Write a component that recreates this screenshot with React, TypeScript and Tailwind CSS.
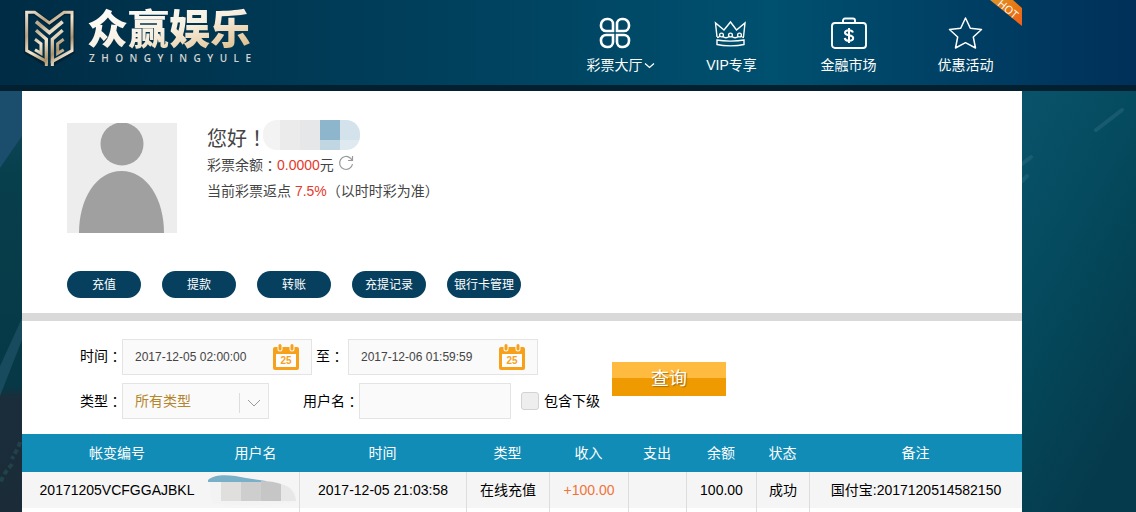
import type { ReactNode } from 'react';

const navLabel = 'flex items-center justify-center text-sm leading-5 text-white';

const actions = ['充值', '提款', '转账', '充提记录', '银行卡管理'];

const columns = [
  { title: '帐变编号', width: 'w-[19%]' },
  { title: '用户名', width: 'w-[8.7%]' },
  { title: '时间', width: 'w-[16.7%]' },
  { title: '类型', width: 'w-[8.3%]' },
  { title: '收入', width: 'w-[7.9%]' },
  { title: '支出', width: 'w-[5.8%]' },
  { title: '余额', width: 'w-[7%]' },
  { title: '状态', width: 'w-[5.3%]' },
  { title: '备注', width: 'w-[21.3%]' },
];

// Full-width punctuation sits in the middle of its square in the TC family
function Punct({ children }: { children: ReactNode }) {
  return <span className="font-['Noto_Sans_CJK_TC',sans-serif]">{children}</span>;
}

function Logo() {
  return (
    <a href="#" className="flex pt-2 pl-[2px]">
      <svg className="w-[51px] h-[60px]" viewBox="0 0 153 180" fill="none" strokeLinejoin="miter">
        <defs>
          <linearGradient id="metal" x1="0" y1="0" x2="150" y2="175" gradientUnits="userSpaceOnUse">
            <stop offset="0" stopColor="#f7f3ec" />
            <stop offset="0.3" stopColor="#b8a385" />
            <stop offset="0.5" stopColor="#f5e8d0" />
            <stop offset="0.7" stopColor="#a99069" />
            <stop offset="0.85" stopColor="#f8f0e2" />
            <stop offset="1" stopColor="#d8c7a8" />
          </linearGradient>
        </defs>
        <path d="M68 168 8 131V14h24l44 32 44-32h24v117l-60 37" stroke="#04141f" strokeWidth="16" opacity="0.5" />
        <g stroke="url(#metal)">
          <path d="M67 174V160L8 128V13h24l44 32 44-32h24v115l-59 32v14" strokeWidth="9" />
          <path d="M36 41l40 33 40-33" strokeWidth="11" />
          <path d="M36 67l31 27v72" strokeWidth="10" />
          <path d="M116 67L85 94v72" strokeWidth="10" />
          <path d="M33 94l18 13v29L33 125" strokeWidth="9" />
          <path d="M119 94l-18 13v29l18-11" strokeWidth="9" />
        </g>
      </svg>
      <span className="flex flex-col ml-3 w-[164px]">
        <span className="bg-linear-to-br from-white via-[#f8efe0] to-[#d9b67c] bg-clip-text text-transparent text-[41px] leading-[45px] font-black whitespace-nowrap">
          众赢娱乐
        </span>
        <span className="flex justify-between pl-[2px] text-[10px] leading-[10px] font-semibold text-[#d5d3cf] font-['Open_Sans',sans-serif]" aria-label="ZHONGYINGYULE">
          {'ZHONGYINGYULE'.split('').map((c, i) => (
            <span key={i}>{c}</span>
          ))}
        </span>
      </span>
    </a>
  );
}

function NavItem({ icon, children }: { icon: ReactNode; children: ReactNode }) {
  return (
    <a href="#" className="w-[117px] flex flex-col items-center gap-[5px] pt-4">
      <span className="h-[34px] flex items-center">{icon}</span>
      <span className={navLabel}>{children}</span>
    </a>
  );
}

function Header() {
  return (
    <header className="relative flex justify-between h-[91px] pl-[22px] pr-[112px] border-b-[6px] border-[#02202f] bg-linear-to-r from-[#002c45] via-[#00506f] via-68% to-[#003059] overflow-hidden">
      <Logo />
      <nav className="flex">
        <NavItem
          icon={
            <svg className="w-8 h-8" viewBox="0 0 32 32" fill="none" stroke="white" strokeWidth="2.6">
              <path d="M8 2h1a5 5 0 0 1 5 5v7H7a5 5 0 0 1-5-5V8a6 6 0 0 1 6-6z" />
              <path d="M24 2h-1a5 5 0 0 0-5 5v7h7a5 5 0 0 0 5-5V8a6 6 0 0 0-6-6z" />
              <path d="M8 30h1a5 5 0 0 0 5-5v-7H7a5 5 0 0 0-5 5v1a6 6 0 0 0 6 6z" />
              <path d="M24 30h-1a5 5 0 0 1-5-5v-7h7a5 5 0 0 1 5 5v1a6 6 0 0 1-6 6z" />
            </svg>
          }
        >
          <span className="ml-3">彩票大厅</span>
          <svg className="w-3 h-3" viewBox="0 0 12 12" fill="none" stroke="white" strokeWidth="1.3">
            <path d="M2 4.500l4.500 4 4.500-4" />
          </svg>
        </NavItem>
        <NavItem
          icon={
            <svg className="w-8 h-7 -ml-1" viewBox="0 0 32 28" fill="none" stroke="white" strokeWidth="1.4">
              <path d="M3 18 1.500 4l8.500 7 6.500-8 6 8L31 4l-1.500 14" />
              <path d="M3 21c7 1.500 20 1.500 27 0v4.500c-7 1.800-20 1.800-27 0z" />
              <circle cx="7.500" cy="16" r="1.900" />
              <circle cx="16.500" cy="16" r="1.900" />
              <circle cx="25.500" cy="16" r="1.900" />
              <path d="M3 18.500c2 0 2.500-.8 3-1.500M9 17.500c1.500 1.800 4.500 1.500 6 0M18 17.500c1.500 1.500 4.500 1.800 6 0M27 17c.5.800 1 1.500 3 1.500" />
            </svg>
          }
        >
          VIP专享
        </NavItem>
        <NavItem
          icon={
            <svg className="w-9 h-8" viewBox="0 0 36 32" fill="none" stroke="white" strokeWidth="1.900">
              <rect x="1" y="6" width="34" height="25" rx="3" />
              <path d="M12 6V3.500A2 2 0 0 1 14 1.500h8a2 2 0 0 1 2 2V6" />
              <path d="M18 11v15M22 15.500c-.5-1.500-2-2.300-4-2.300-2.500 0-4 1-4 2.600 0 3.600 8.200 1.500 8.200 5.200 0 1.800-1.700 2.800-4.200 2.800-2.300 0-4-1-4.300-2.800" strokeWidth="2" />
            </svg>
          }
        >
          金融市场
        </NavItem>
        <NavItem
          icon={
            <svg className="w-9 h-[34px]" viewBox="0 0 36 34" fill="none" stroke="white" strokeWidth="1.500" strokeLinejoin="round">
              <path d="M17.500 2l4.800 10.200 11.200 1.300-8.200 7.500 2.200 11-10-5.300-10 5.300 2.200-11L1.500 13.500l11.200-1.300z" />
            </svg>
          }
        >
          优惠活动
        </NavItem>
      </nav>
      <svg className="absolute top-0 right-[114px] w-8 h-[27px]" viewBox="0 0 32 27">
        <defs>
          <linearGradient id="hot" x1="0" y1="0" x2="1" y2="1">
            <stop offset="0" stopColor="#e0952e" />
            <stop offset="0.5" stopColor="#e87812" />
            <stop offset="1" stopColor="#f0601c" />
          </linearGradient>
        </defs>
        <path d="M0 0h23l9 8v18z" fill="url(#hot)" />
        <text x="18" y="13" transform="rotate(40 18 9)" textAnchor="middle" fontSize="11" fill="white" className="font-['Open_Sans',sans-serif]">
          HOT
        </text>
      </svg>
    </header>
  );
}

function Backdrop() {
  return (
    <div aria-hidden="true" className="absolute inset-0 -z-10 flex justify-between bg-[#064a60]">
      <svg className="w-[22px] h-full" viewBox="0 91 22 421" preserveAspectRatio="xMinYMin slice">
        <defs>
          <linearGradient id="left" x1="0" y1="0" x2="0" y2="1">
            <stop offset="0" stopColor="#104a62" />
            <stop offset="0.2" stopColor="#083f4c" />
            <stop offset="0.7" stopColor="#063846" />
            <stop offset="0.73" stopColor="#1b2d3b" />
            <stop offset="1" stopColor="#1b2c38" />
          </linearGradient>
        </defs>
        <rect y="91" width="22" height="421" fill="url(#left)" />
        <path d="M0 91h22v45L0 168z" fill="#1b4d6c" />
        <path d="M22 318v22L0 396v-30z" fill="#174b5d" />
        <path d="M20 442c-2 8-5 10-8 17M12 464c-4 6-8 8-12 20" stroke="#21424b" strokeWidth="4" strokeDasharray="5 3" fill="none" />
      </svg>
      <svg className="w-[114px] h-full" viewBox="1022 91 114 421" preserveAspectRatio="xMinYMin slice">
        <defs>
          <linearGradient id="right" x1="0" y1="0" x2="0.5" y2="1">
            <stop offset="0" stopColor="#09536a" />
            <stop offset="0.4" stopColor="#054b60" />
            <stop offset="0.7" stopColor="#044355" />
            <stop offset="1" stopColor="#053a4c" />
          </linearGradient>
        </defs>
        <rect x="1022" y="91" width="114" height="421" fill="url(#right)" />
        <path d="M1096 130l26-20M1022 164l9-7M1022 181l5-5" stroke="#2a6a7d" strokeWidth="4" strokeLinecap="round" opacity="0.5" />
      </svg>
    </div>
  );
}

function Profile() {
  return (
    <section className="px-[45px] pt-[29px] pb-[15px]">
      <div className="flex gap-[30px]">
        <svg className="w-[110px] h-[110px] mt-[3px] bg-[#ededed]" viewBox="0 0 110 110" fill="#a0a0a0" role="img" aria-label="头像">
          <circle cx="55" cy="21" r="21.500" />
          <path d="M12 110C12 76 29 48 54.500 48S97 76 97 110z" />
        </svg>
        <div className="text-sm text-[#444]">
          <div className="h-8 flex items-start text-xl">
            <h1 className="leading-9">您好<Punct>！</Punct></h1>
            <svg className="w-[97px] h-[30px] -ml-1 rounded-[14px]" viewBox="0 0 97 30" aria-hidden="true">
              <path d="M0 0h17v30H0z" fill="#f4f3f3" />
              <path d="M17 0h20v30H17z" fill="#ebebec" />
              <path d="M37 0h20v30H37z" fill="#e6e7e8" />
              <path d="M57 0h20v20H57z" fill="#8db5cb" />
              <path d="M77 0h20v20H77z" fill="#d3e2eb" />
              <path d="M57 20h20v10H57z" fill="#c0d6e2" />
              <path d="M77 20h20v10H77z" fill="#deeaef" />
            </svg>
          </div>
          <p className="flex items-center leading-[26px]">
            彩票余额<Punct>：</Punct>
            <span className="text-[#e4392b]">0.0000</span>元
            <button type="button" aria-label="刷新" className="ml-1 mb-1">
              <svg className="w-4 h-4" viewBox="0 0 16 16" fill="none" stroke="#999" strokeWidth="1.200">
                <path d="M14.500 9A6.500 6.500 0 1 1 12.500 3.200L14 5" />
                <path d="M14.500 1v4.500H10" />
              </svg>
            </button>
          </p>
          <p className="leading-6">
            当前彩票返点 <span className="text-[#e4392b]">7.5%</span>
            <Punct>（</Punct>以时时彩为准<Punct>）</Punct>
          </p>
        </div>
      </div>
      <div className="flex gap-[21px] mt-[38px]">
        {actions.map(a => (
          <button key={a} type="button" className="w-[74px] h-[27px] rounded-full bg-[#07405f] text-white text-xs whitespace-nowrap">
            {a}
          </button>
        ))}
      </div>
    </section>
  );
}

function DateField({ id, value }: { id: string; value: string }) {
  return (
    <div className="flex items-center w-[190px] h-9 pl-3 pr-3 border border-[#e4e4e4] bg-[#fafafa]">
      <input id={id} defaultValue={value} className="flex-1 min-w-0 text-xs text-[#444] outline-none" />
      <svg className="w-[26px] h-[26px]" viewBox="0 0 26 26" aria-hidden="true">
        <path d="M0 5a2 2 0 0 1 2-2h22a2 2 0 0 1 2 2v19a2 2 0 0 1-2 2H2a2 2 0 0 1-2-2z" fill="#f7a11b" />
        <path d="M3 10h20v13H3z" fill="#fdfdfd" />
        <path d="M7 1v4M19 1v4" stroke="#fafafa" strokeWidth="5" strokeLinecap="round" />
        <path d="M7 1.500v3.500M19 1.500v3.500" stroke="#f7a11b" strokeWidth="3" strokeLinecap="round" />
        <text x="13" y="20" textAnchor="middle" fontSize="10" fontWeight="bold" fill="#f7a11b" className="font-['Liberation_Sans',sans-serif]">
          25
        </text>
      </svg>
    </div>
  );
}

function SearchForm() {
  return (
    <form className="flex items-center gap-3 pl-[58px] pt-[18px] pb-[15px] text-sm text-black" onSubmit={e => e.preventDefault()}>
      <div className="flex flex-col gap-2">
        <div className="flex items-center">
          <label htmlFor="from" className="flex pb-0.5">时间<Punct>：</Punct></label>
          <DateField id="from" value="2017-12-05 02:00:00" />
          <label htmlFor="to" className="flex mx-1 w-7 pb-0.5">至<Punct>：</Punct></label>
          <DateField id="to" value="2017-12-06 01:59:59" />
        </div>
        <div className="flex items-center">
          <label htmlFor="type" className="flex">类型<Punct>：</Punct></label>
          <div className="relative">
            <select id="type" className="block appearance-none w-[147px] h-9 pl-3 border border-[#e4e4e4] bg-[#fafafa] text-[#b5852c] outline-none">
              <option>所有类型</option>
            </select>
            <svg className="absolute right-[7px] top-2.5 w-6 h-5 pointer-events-none" viewBox="0 0 24 20" fill="none">
              <path d="M1.500 0v20" stroke="#ddd" />
              <path d="M10 7l6 6 6-6" stroke="#999" />
            </svg>
          </div>
          <label htmlFor="user" className="flex ml-[34px]">用户名<Punct>：</Punct></label>
          <input id="user" className="w-[152px] h-9 px-3 border border-[#e4e4e4] bg-[#fafafa] outline-none" />
          <input id="sub" type="checkbox" className="appearance-none w-[18px] h-[18px] ml-2.5 mr-[5px] rounded-[3px] border border-[#d2d2d2] bg-[#eee] checked:bg-[#118cb7]" />
          <label htmlFor="sub">包含下级</label>
        </div>
      </div>
      <button type="submit" className="w-[114px] h-[34px] bg-linear-to-b from-[#ffbb40] from-47% to-[#ee9a00] to-47% text-white text-lg leading-8 text-shadow-[1px_1px_1px_#a86f10]">
        查询
      </button>
    </form>
  );
}

function Records() {
  const cell = 'border-l border-[#ddd]';
  return (
    <table className="w-full table-fixed border-separate border-spacing-0 text-sm text-center text-black whitespace-nowrap">
      <thead>
        <tr className="h-[38px] bg-[#118cb7] text-white">
          {columns.map(c => (
            <th key={c.title} scope="col" className={`${c.width} font-normal`}>{c.title}</th>
          ))}
        </tr>
      </thead>
      <tbody>
        <tr className="h-9 bg-[#f5f5f5]">
          <td>20171205VCFGGAJBKL</td>
          <td>
            <svg className="w-[93px] h-[34px] -ml-1" viewBox="0 0 93 34" aria-hidden="true">
              <path d="M1 7C10-1 28 4 44 6s38 4 44 14v9q-44 6-84 1z" fill="#f3f3f3" />
              <path d="M0 7C8 0 24 2 38 5l20 3v1H0z" fill="#78b0c8" />
              <path d="M13 9h20v19H13z" fill="#e0dfdd" />
              <path d="M33 9h20v19H33z" fill="#cecece" />
              <path d="M53 8q12 0 20 3v17H53z" fill="#c6c6c6" />
              <path d="M73 11q13 3 15 17H73z" fill="#e7e7e7" />
            </svg>
          </td>
          <td className={cell}>2017-12-05 21:03:58</td>
          <td className={cell}>在线充值</td>
          <td className={`${cell} text-[#f0743a]`}>+100.00</td>
          <td className={cell}></td>
          <td className={cell}>100.00</td>
          <td className={cell}>成功</td>
          <td className={cell}>国付宝:2017120514582150</td>
        </tr>
        <tr className="h-1" aria-hidden="true">
          {columns.map((c, i) => (
            <td key={c.title} className={i > 1 ? cell : ''}></td>
          ))}
        </tr>
      </tbody>
    </table>
  );
}

export default function App() {
  return (
    <div className="min-h-screen flex flex-col font-['Liberation_Sans','Noto_Sans_CJK_SC',sans-serif]">
      <Header />
      <div className="relative isolate flex-1 flex pl-[22px] pr-[114px]">
        <Backdrop />
        <main className="flex-1 min-w-0 bg-white">
          <Profile />
          <hr className="h-2 border-0 bg-[#d9d9d9]" />
          <SearchForm />
          <Records />
        </main>
      </div>
    </div>
  );
}
